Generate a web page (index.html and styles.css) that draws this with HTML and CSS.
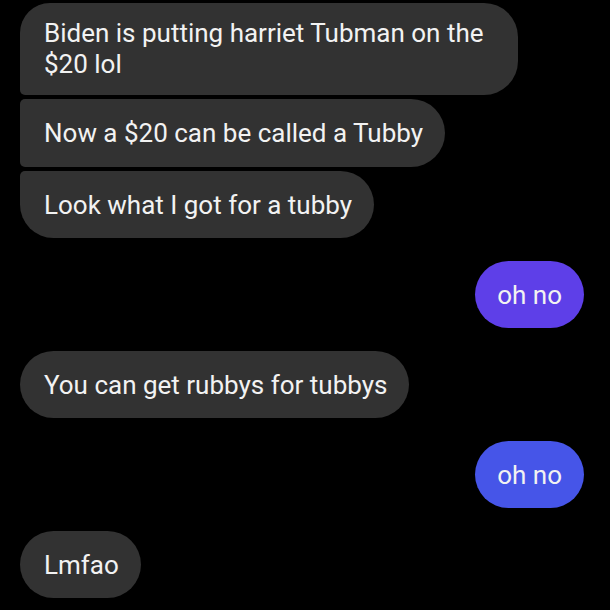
FILE: index.html
```html
<!DOCTYPE html>
<html lang="en">
<head>
    <meta charset="UTF-8">
    <title>Messages</title>
    <link rel="stylesheet" href="styles.css">
</head>
<body>
    <div class="thread">
        <div class="group">
            <div class="bubble in first multi">Biden is putting harriet Tubman on the $20 lol</div>
            <div class="bubble in mid">Now a $20 can be called a Tubby</div>
            <div class="bubble in last">Look what I got for a tubby</div>
        </div>
        <div class="bubble out purple">oh no</div>
        <div class="bubble in">You can get rubbys for tubbys</div>
        <div class="bubble out blue">oh no</div>
        <div class="bubble in">Lmfao</div>
    </div>
</body>
</html>
```

FILE: styles.css
```css
html, body {
    margin: 0;
    background: #000;
}
body {
    font-family: Roboto, "Noto Sans", sans-serif;
    width: 610px;
    height: 610px;
    overflow: hidden;
}
.thread {
    display: flex;
    flex-direction: column;
    gap: 22.5px;
    padding: 3px 26px 0 20px;
}
.group {
    display: flex;
    flex-direction: column;
    align-items: flex-start;
    gap: 4px;
}
.bubble {
    font-size: 26px;
    line-height: 31px;
    color: #f2f2f2;
    padding: 19px 22px 17.5px 24px;
    border-radius: 34px;
}
.bubble.multi {
    padding: 15px 30px 15px 24px;
    max-width: 444px;
}
.in {
    align-self: flex-start;
    background: #323232;
}
.in.first {
    border-radius: 30px 34px 34px 5px;
}
.in.mid {
    border-radius: 5px 34px 34px 5px;
}
.in.last {
    border-radius: 5px 34px 34px 34px;
}
.out {
    align-self: flex-end;
    padding: 19px 22px 17.5px 22px;
}
.purple {
    background: #5e3fe8;
}
.blue {
    background: #4655e8;
}
```
